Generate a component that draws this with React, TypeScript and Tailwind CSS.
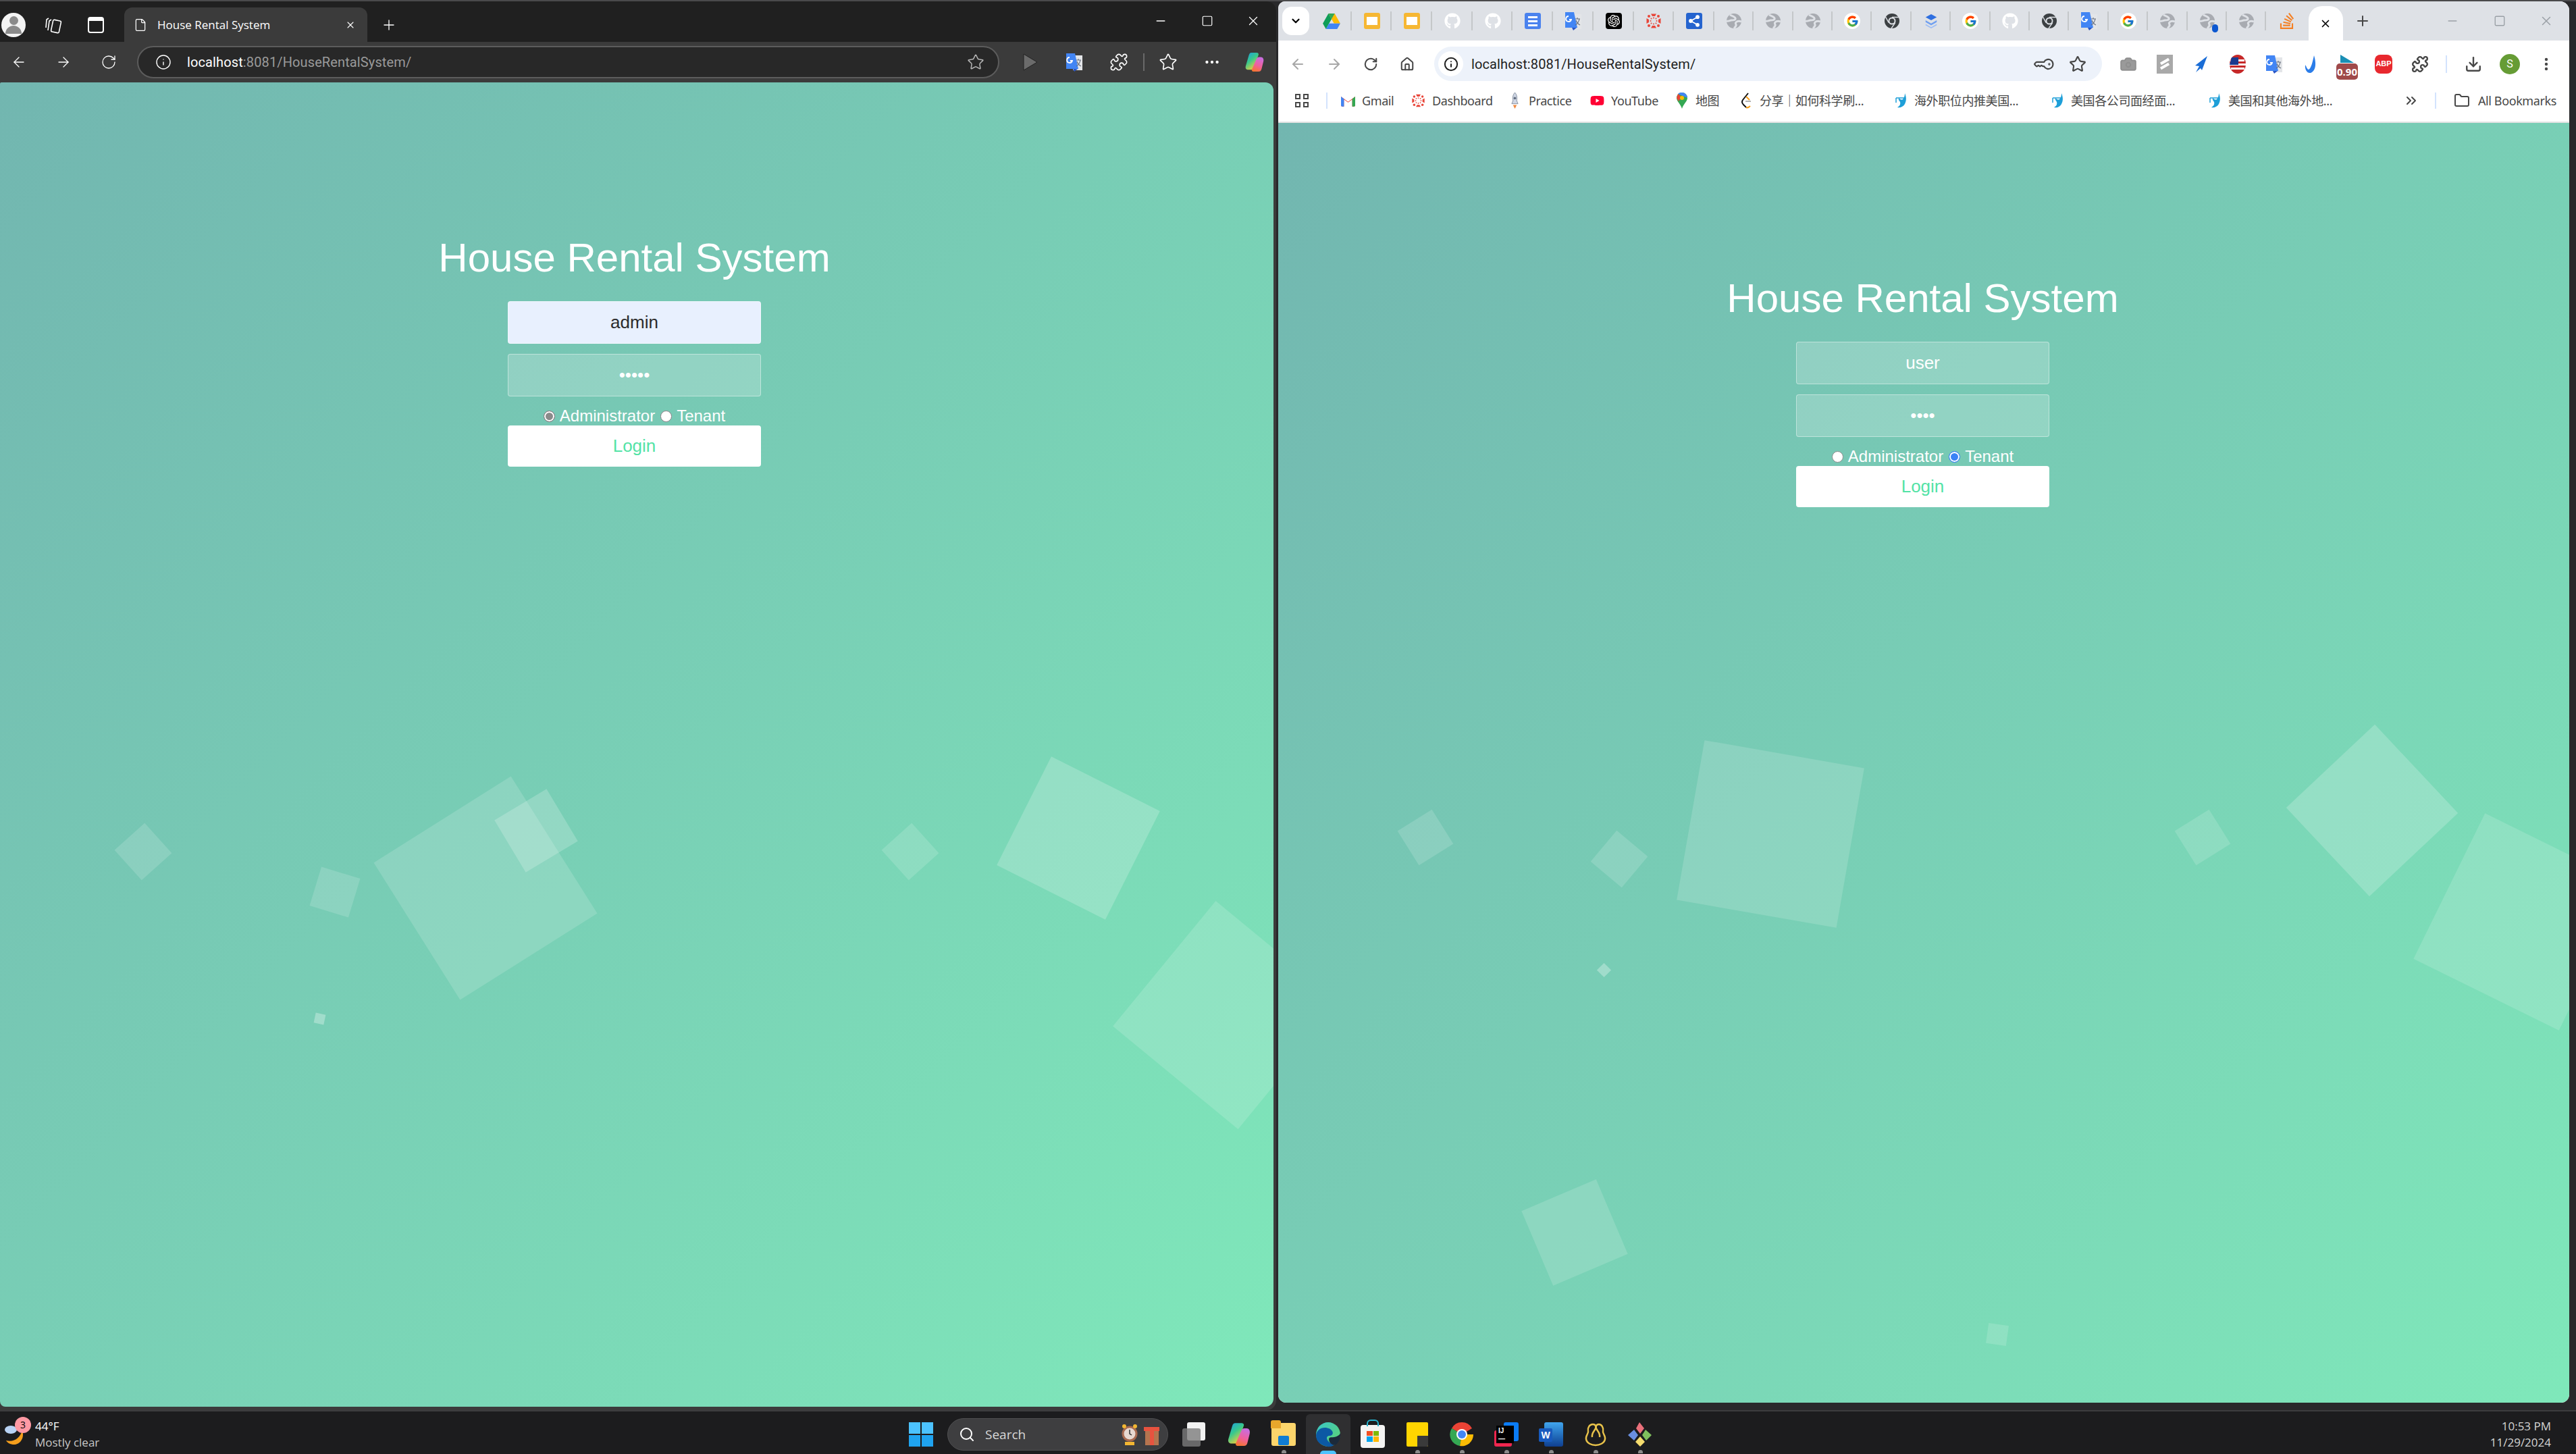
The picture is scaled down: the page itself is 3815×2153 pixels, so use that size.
import React from "react";
import {
  ArrowLeft, ArrowRight, RotateCw, Info, Star, Plus, X, Minus, Square, File, KeyRound, Home, Camera,
  Download, MoreVertical, MoreHorizontal, ChevronDown, ChevronsRight, Folder, Search, Puzzle,
} from "lucide-react";
import { FaGithub, FaYoutube } from "react-icons/fa";
import { FcGoogle } from "react-icons/fc";
import { SiOpenai, SiStackoverflow } from "react-icons/si";

const Globe = ({ dot = false }: { dot?: boolean }) => (
  <div className="relative w-[24px] h-[24px]">
    <svg viewBox="0 0 24 24" className="w-[24px] h-[24px]">
      <circle cx="12" cy="12" r="11" fill="#a8abb1" />
      <path d="M6 3c3 2 7 2 8 5s-4 3-6 3-4 2-7 1M23 13c-3-1-6-1-8 1s1 3 0 5-2 3-3 4" fill="none" stroke="#dee1e6" strokeWidth="3" />
    </svg>
    {dot && <span className="absolute right-[-4px] bottom-[-5px] w-[9px] h-[12px] rounded-full bg-[#0b57d0]" />}
  </div>
);

const Translate = () => (
  <svg viewBox="0 0 26 28" className="w-[26px] h-[28px]">
    <path d="M11 4h14v22H11z" fill="#e3e5e8" />
    <path d="M1 1h13l5 23H1z" fill="#4285f4" />
    <path d="M11 24h7l-5 4z" fill="#2a56c6" />
    <path d="M6 7a4 4 0 1 0 4 5H7" fill="none" stroke="#fff" strokeWidth="1.8" />
    <path d="M16 11h7M19 9v2M22 11c-1 5-4 8-6 9M17 13c1 3 4 6 6 7" fill="none" stroke="#6b7280" strokeWidth="1.2" />
  </svg>
);

const Drive = () => (
  <svg viewBox="0 0 28 26" className="w-[26px] h-[24px]">
    <path d="M9 1h10l9 16H18z" fill="#fbbc04" />
    <path d="M9 1l5 9-9 16-5-9z" fill="#0f9d58" />
    <path d="M10 17h18l-5 9H5z" fill="#4285f4" />
    <path d="M9 1h10l-5 9z" fill="#34a853" />
  </svg>
);

const Slides = () => (
  <div className="w-[24px] h-[24px] bg-[#f6b733] rounded-[3px] flex items-center justify-center">
    <div className="w-[16px] h-[12px] bg-white" />
  </div>
);

const Docs = () => (
  <div className="w-[24px] h-[24px] bg-[#4a82ee] rounded-[3px] flex flex-col items-center justify-center gap-[3px]">
    <div className="w-[14px] h-[3px] bg-white" />
    <div className="w-[14px] h-[3px] bg-white" />
    <div className="w-[14px] h-[3px] bg-white" />
  </div>
);

const Canvas = ({ s = 24 }: { s?: number }) => (
  <svg viewBox="0 0 24 24" width={s} height={s}>
    <g fill="#e8463a">
      <path d="M8 1.5h8L14 5h-4zM8 22.5h8L14 19h-4zM1.5 8v8L5 14v-4zM22.5 8v8L19 14v-4z" />
      <circle cx="5" cy="5" r="2" /><circle cx="19" cy="5" r="2" /><circle cx="5" cy="19" r="2" /><circle cx="19" cy="19" r="2" />
      <circle cx="12" cy="7.5" r="1" /><circle cx="12" cy="16.5" r="1" /><circle cx="7.5" cy="12" r="1" /><circle cx="16.5" cy="12" r="1" />
      <circle cx="8.5" cy="8.5" r="1" /><circle cx="15.5" cy="8.5" r="1" /><circle cx="8.5" cy="15.5" r="1" /><circle cx="15.5" cy="15.5" r="1" />
    </g>
  </svg>
);

const ShareTile = () => (
  <div className="w-[24px] h-[24px] bg-[#2564cf] rounded-[3px] flex items-center justify-center">
    <svg viewBox="0 0 24 24" className="w-[20px] h-[20px]">
      <path d="M6 12l12-7M6 12l12 7" stroke="#fff" strokeWidth="2" />
      <circle cx="6" cy="12" r="3.5" fill="#fff" /><circle cx="18" cy="5" r="3.5" fill="#fff" /><circle cx="18" cy="19" r="3.5" fill="#fff" />
    </svg>
  </div>
);

const ChromeDark = () => (
  <svg viewBox="0 0 24 24" className="w-[24px] h-[24px]">
    <circle cx="12" cy="12" r="11" fill="#3c4043" />
    <circle cx="12" cy="12" r="5.5" fill="#dee1e6" />
    <circle cx="12" cy="12" r="3.6" fill="#3c4043" />
    <path d="M12 6.5h10M7.2 14.7L2.5 6M16.8 14.7L11 23" stroke="#dee1e6" strokeWidth="1.4" />
  </svg>
);

const Layers = () => (
  <svg viewBox="0 0 24 24" className="w-[22px] h-[24px]">
    <path d="M12 1l9 5-9 5-9-5z" fill="#2f6fe0" />
    <path d="M3 11l9 5 9-5v3l-9 5-9-5z" fill="#6f9ff0" />
    <path d="M3 17l9 5 9-5v2l-9 5-9-5z" fill="#9dbdf5" />
  </svg>
);

const GithubTab = () => <FaGithub className="w-[24px] h-[24px] text-white" />;
const GoogleTab = () => (
  <div className="w-[24px] h-[24px] rounded-full bg-white flex items-center justify-center"><FcGoogle className="w-[19px] h-[19px]" /></div>
);
const ChatGpt = () => (
  <div className="w-[24px] h-[24px] bg-black rounded-[4px] flex items-center justify-center"><SiOpenai className="w-[18px] h-[18px] text-white" /></div>
);

const tabIcons = [
  <Drive />, <Slides />, <Slides />, <GithubTab />, <GithubTab />, <Docs />, <Translate />, <ChatGpt />, <Canvas />, <ShareTile />,
  <Globe />, <Globe />, <Globe />, <GoogleTab />, <ChromeDark />, <Layers />, <GoogleTab />, <GithubTab />, <ChromeDark />, <Translate />,
  <GoogleTab />, <Globe />, <Globe dot />, <Globe />, <SiStackoverflow className="w-[24px] h-[24px] text-[#f48024]" />,
];

const Copilot = ({ s = 30 }: { s?: number }) => (
  <svg viewBox="0 0 30 32" width={s} height={s}>
    <defs>
      <linearGradient id="cpa" x1="0" y1="0" x2="0.6" y2="1">
        <stop offset="0" stopColor="#1b9be8" /><stop offset="0.5" stopColor="#38c88c" /><stop offset="1" stopColor="#f2cf3a" />
      </linearGradient>
      <linearGradient id="cpb" x1="0.6" y1="0" x2="0.3" y2="1">
        <stop offset="0" stopColor="#c86de0" /><stop offset="0.55" stopColor="#f0609c" /><stop offset="1" stopColor="#f5752f" />
      </linearGradient>
    </defs>
    <path d="M10 1h8c3 0 4 2 3 4l-7 20c-1 2-2 3-5 3H5c-3 0-5-2-4-6l5-17c1-3 2-4 4-4z" fill="url(#cpa)" />
    <path d="M13 31h8c3 0 4-1 5-4l3-12c1-4-1-7-4-7h-3c-2 0-3 1-4 3l-7 16c-1 2 0 4 2 4z" fill="url(#cpb)" />
  </svg>
);

const Squares = () => (
  <div className="grid grid-cols-2 gap-[4px]">
    <span className="w-[8px] h-[8px] border-2 border-[#474747]" /><span className="w-[8px] h-[8px] border-2 border-[#474747]" />
    <span className="w-[8px] h-[8px] border-2 border-[#474747]" /><span className="w-[8px] h-[8px] border-2 border-[#474747]" />
  </div>
);

const Wing = () => (
  <svg viewBox="0 0 20 24" className="w-[20px] h-[24px]">
    <path d="M16 1c2 5 3 10 0 16-2 4-7 6-11 5 3-2 5-4 4-8-1-2-3-3-2-6 3 3 5 3 6 2 2-2 3-5 3-9z" fill="#1e9fd8" />
    <path d="M3 8h14M3 8v7" stroke="#1e9fd8" strokeWidth="1.5" fill="none" />
  </svg>
);

function Bookmark({ icon, label, cls }: { icon: React.ReactNode; label: string; cls: string }) {
  return (
    <div className={"flex items-center shrink-0 " + cls}>
      <span className="w-[21px] flex justify-center">{icon}</span>
      <span className="ml-[10px] text-[18px] leading-[24px] text-[#474747] whitespace-nowrap font-['Noto_Sans','Noto_Sans_CJK_SC',sans-serif] tracking-[-0.4px]">{label}</span>
    </div>
  );
}

function LoginForm({ user, pass, userFilled, tenant, bubbles, cls }: {
  user: string; pass: string; userFilled: boolean; tenant: boolean; bubbles: React.ReactNode; cls: string;
}) {
  return (
    <div className={"relative overflow-hidden bg-linear-to-br from-[#72b6b0] to-[#7fe8ba] font-['Liberation_Sans',Arial,sans-serif] " + cls}>
      {bubbles}
      <div className="relative flex flex-col items-center pt-[224px]">
        <h1 className="text-[60px] leading-[72px] font-extralight text-white">House Rental System</h1>
        <form className="mt-[28px] w-[375px] flex flex-col items-center">
          <input
            readOnly
            value={user}
            className={
              userFilled
                ? "w-full h-[63px] rounded-[4px] border border-white/40 bg-[#e8f0fe] text-center text-[26px] text-[#2b2b2b] outline-none"
                : "w-full h-[63px] rounded-[4px] border border-white/40 bg-white/20 text-center text-[26px] text-white outline-none"
            }
          />
          <input
            readOnly
            type="password"
            value={pass}
            className="mt-[15px] w-full h-[63px] rounded-[4px] border border-white/40 bg-white/20 text-center text-[26px] text-white outline-none"
          />
          <div className="mt-[15px] h-[28px] flex items-center text-[24px] leading-[28px] text-white">
            <span className={
              tenant
                ? "w-[17px] h-[17px] rounded-full border border-[#8a8a8a] bg-white"
                : "w-[17px] h-[17px] rounded-full border border-[#8a7f86] bg-[#8a8a8a] shadow-[inset_0_0_0_2px_white]"
            } />
            <span className="ml-[7px]">Administrator</span>
            <span className={
              tenant
                ? "ml-[8px] w-[17px] h-[17px] rounded-full border border-[#3b82f6] bg-[#3b82f6] shadow-[inset_0_0_0_2px_white]"
                : "ml-[8px] w-[17px] h-[17px] rounded-full border border-[#8a7f86] bg-white"
            } />
            <span className="ml-[7px]">Tenant</span>
          </div>
          <button type="button" className="w-full h-[61px] rounded-[4px] bg-white text-[26px] text-[#53e3a6]">Login</button>
        </form>
      </div>
    </div>
  );
}

const leftBubbles = (
  <>
    <div className="absolute left-[599px] top-[1073px] w-[240px] h-[240px] rotate-[57.8deg] bg-white/15" />
    <div className="absolute left-[749px] top-[1063px] w-[90px] h-[90px] rotate-[59deg] bg-white/20" />
    <div className="absolute left-[182px] top-[1109px] w-[60px] h-[60px] rotate-[48deg] bg-white/15" />
    <div className="absolute left-[466px] top-[1169px] w-[60px] h-[60px] rotate-[17deg] bg-white/15" />
    <div className="absolute left-[466px] top-[1379px] w-[15px] h-[15px] rotate-[12deg] bg-white/30" />
    <div className="absolute left-[1318px] top-[1109px] w-[60px] h-[60px] rotate-[48deg] bg-white/15" />
    <div className="absolute left-[1507px] top-[1029px] w-[180px] h-[180px] rotate-[26.7deg] bg-white/20" />
    <div className="absolute left-[1697px] top-[1261px] w-[240px] h-[240px] rotate-[39.4deg] bg-white/15" />
  </>
);

const rightBubbles = (
  <>
    <div className="absolute left-[609px] top-[933px] w-[240px] h-[240px] rotate-[9.9deg] bg-white/15" />
    <div className="absolute left-[188px] top-[1028px] w-[60px] h-[60px] rotate-[58deg] bg-white/15" />
    <div className="absolute left-[475px] top-[1060px] w-[60px] h-[60px] rotate-[40deg] bg-white/15" />
    <div className="absolute left-[475px] top-[1247px] w-[15px] h-[15px] rotate-[45deg] bg-white/30" />
    <div className="absolute left-[1339px] top-[1028px] w-[60px] h-[60px] rotate-[58deg] bg-white/15" />
    <div className="absolute left-[1530px] top-[928px] w-[180px] h-[180px] rotate-[46.8deg] bg-white/20" />
    <div className="absolute left-[1722px] top-[1063px] w-[240px] h-[240px] rotate-[26.2deg] bg-white/15" />
    <div className="absolute left-[379px] top-[1583px] w-[120px] h-[120px] rotate-[67deg] bg-white/15" />
    <div className="absolute left-[1050px] top-[1779px] w-[30px] h-[30px] rotate-[8deg] bg-white/15" />
  </>
);

function EdgeWindow() {
  return (
    <div className="w-[1890px] h-full bg-[#3b3b3b] flex flex-col rounded-r-[14px] text-white">
      <div className="h-[60px] pt-[9px] bg-[#202020] flex items-center rounded-tr-[14px] font-['Open_Sans',sans-serif]">
        <div className="ml-[2px] w-[36px] h-[36px] rounded-full bg-[#f4f4f4] flex flex-col items-center justify-center overflow-hidden">
          <span className="w-[13px] h-[13px] rounded-full bg-[#8b8b8b]" />
          <span className="mt-[1px] w-[24px] h-[12px] rounded-t-full bg-[#8b8b8b]" />
        </div>
        <svg viewBox="0 0 26 26" className="ml-[28px] w-[26px] h-[26px]" fill="none" stroke="#fff" strokeWidth="1.6" strokeLinejoin="round">
          <rect x="11" y="6" width="12" height="18" rx="2" transform="rotate(12 17 15)" />
          <path d="M10 5l-3 2-2 14M6 3L3 5 2 17" />
        </svg>
        <div className="ml-[38px] w-[24px] h-[24px] rounded-[4px] border-2 border-white border-t-[6px]" />
        <div className="ml-[30px] w-[360px] h-full rounded-t-[12px] bg-[#3b3b3b] flex items-center pl-[14px] pr-[17px]">
          <File className="w-[20px] h-[24px] text-white" strokeWidth={1.5} />
          <span className="ml-[15px] flex-1 text-[17px] text-white whitespace-nowrap">House Rental System</span>
          <X className="w-[16px] h-[16px] text-white" strokeWidth={1.6} />
        </div>
        <Plus className="ml-[20px] w-[24px] h-[24px] text-white" strokeWidth={1.3} />
        <div className="flex-1" />
        <div className="flex items-center mb-[11px]">
          <span className="w-[69px] flex justify-center"><Minus className="w-[20px] h-[20px]" strokeWidth={1.6} /></span>
          <span className="w-[69px] flex justify-center"><Square className="w-[18px] h-[18px]" strokeWidth={1.6} /></span>
          <span className="w-[68px] flex justify-center"><X className="w-[22px] h-[22px]" strokeWidth={1.4} /></span>
        </div>
      </div>
      <div className="h-[60px] flex items-center">
        <ArrowLeft className="ml-[16px] w-[24px] h-[24px]" strokeWidth={1.3} />
        <ArrowRight className="ml-[42px] w-[24px] h-[24px]" strokeWidth={1.3} />
        <RotateCw className="ml-[43px] w-[24px] h-[24px]" strokeWidth={1.3} />
        <div className="ml-[30px] w-[1277px] h-[48px] rounded-full border-2 border-[#5c5c5c] bg-[#282828] flex items-center pl-[25px] pr-[20px]">
          <Info className="w-[24px] h-[24px]" strokeWidth={1.4} />
          <span className="ml-[23px] flex-1 text-[20px] font-['Roboto',sans-serif] tracking-[0.12px] whitespace-nowrap">
            <span className="text-white">localhost</span><span className="text-[#9a9a9a]">:8081/HouseRentalSystem/</span>
          </span>
          <Star className="w-[26px] h-[26px] text-[#b5b5b5]" strokeWidth={1.4} />
        </div>
        <svg viewBox="0 0 30 30" className="ml-[30px] w-[30px] h-[30px]"><path d="M6 3l20 12L6 27z" fill="#6b6b6b" stroke="#222" /></svg>
        <span className="ml-[36px] w-[30px] flex justify-center"><Translate /></span>
        <Puzzle className="ml-[37px] w-[28px] h-[28px]" strokeWidth={1.4} />
        <span className="ml-[22px] w-[2px] h-[26px] bg-[#6a6a6a]" />
        <Star className="ml-[21px] w-[28px] h-[28px]" strokeWidth={1.4} />
        <MoreHorizontal className="ml-[38px] w-[26px] h-[26px]" strokeWidth={2} />
        <span className="ml-[35px]"><Copilot /></span>
      </div>
      <LoginForm
        user="admin"
        pass="admin"
        userFilled
        tenant={false}
        bubbles={leftBubbles}
        cls="w-[1886px] h-[1961px] rounded-r-[12px] rounded-bl-[8px] rounded-tl-[2px] pr-[7px]"
      />
    </div>
  );
}

function ExtSlot({ children }: { children: React.ReactNode }) {
  return <span className="w-[54px] flex items-center justify-center shrink-0">{children}</span>;
}

function ChromeWindow() {
  return (
    <div className="ml-[3px] w-[1912px] h-[2075px] flex flex-col rounded-tr-[14px] rounded-b-[12px] rounded-tl-[10px] overflow-hidden bg-white">
      <div className="h-[58px] bg-[#dee1e6] flex items-center">
        <span className="ml-[6px] w-[40px] h-[42px] rounded-[14px] bg-white flex items-center justify-center">
          <ChevronDown className="w-[18px] h-[18px] text-black" strokeWidth={3} />
        </span>
        <div className="ml-[3px] flex items-center">
          {tabIcons.map((ic, i) => (
            <span key={i} className={(i < 10 ? "w-[59.7px]" : "w-[58.4px]") + " flex items-center shrink-0"}>
              <span className="flex-1 flex justify-center pl-[2px]">{ic}</span>
              {i < 24 && <span className="w-[2px] h-[28px] bg-[#c4c7c9]" />}
            </span>
          ))}
        </div>
        <span className="ml-[4px] w-[51px] h-[51px] self-end rounded-t-[20px] bg-white flex items-center justify-center">
          <X className="w-[18px] h-[18px] text-black" strokeWidth={2.2} />
        </span>
        <Plus className="ml-[17px] w-[24px] h-[24px] text-[#474747]" strokeWidth={2} />
        <div className="flex-1" />
        <span className="w-[70px] flex justify-center"><Minus className="w-[20px] h-[20px] text-[#9aa0a6]" strokeWidth={1.8} /></span>
        <span className="w-[70px] flex justify-center"><Square className="w-[18px] h-[18px] text-[#9aa0a6]" strokeWidth={1.8} /></span>
        <span className="w-[68px] flex justify-center"><X className="w-[22px] h-[22px] text-[#9aa0a6]" strokeWidth={1.6} /></span>
      </div>
      <div className="h-[65px] pt-[4px] bg-white flex items-center">
        <span className="ml-[2px]" />
        <ExtSlot><ArrowLeft className="w-[24px] h-[24px] text-[#a8a8a8]" strokeWidth={2} /></ExtSlot>
        <ExtSlot><ArrowRight className="w-[24px] h-[24px] text-[#a8a8a8]" strokeWidth={2} /></ExtSlot>
        <ExtSlot><RotateCw className="w-[22px] h-[22px] text-[#474747]" strokeWidth={2.2} /></ExtSlot>
        <ExtSlot><Home className="w-[22px] h-[22px] text-[#474747]" strokeWidth={2.2} /></ExtSlot>
        <div className="ml-[13px] w-[989px] h-[51px] rounded-full bg-[#edf2fa] flex items-center pl-[6px] pr-[23px]">
          <span className="w-[37px] h-[37px] rounded-full bg-white flex items-center justify-center">
            <Info className="w-[22px] h-[22px] text-[#1f1f1f]" strokeWidth={2.2} />
          </span>
          <span className="ml-[12px] flex-1 text-[20px] text-[#1f1f1f] font-['Roboto',sans-serif] tracking-[0.12px] whitespace-nowrap">localhost:8081/HouseRentalSystem/</span>
          <KeyRound className="w-[26px] h-[26px] text-[#474747] rotate-[45deg]" strokeWidth={2} />
          <Star className="ml-[23px] w-[26px] h-[26px] text-[#474747]" strokeWidth={2} />
        </div>
        <span className="ml-[12px]" />
        <ExtSlot><Camera className="w-[26px] h-[26px] text-[#8f8f8f] fill-[#9a9a9a]" strokeWidth={1.8} /></ExtSlot>
        <ExtSlot>
          <span className="w-[24px] h-[28px] bg-[#a9a9a9] flex flex-col items-center justify-center gap-[3px]">
            <span className="w-[14px] h-[4px] bg-white -rotate-[30deg]" /><span className="w-[14px] h-[4px] bg-white -rotate-[30deg]" />
          </span>
        </ExtSlot>
        <ExtSlot>
          <svg viewBox="0 0 24 28" className="w-[24px] h-[28px]"><path d="M21 2L3 16l6 1-5 9 7-6 2 3z" fill="#1a6dd6" /></svg>
        </ExtSlot>
        <ExtSlot>
          <svg viewBox="0 0 26 28" className="w-[26px] h-[28px]">
            <ellipse cx="13" cy="14" rx="12" ry="14" fill="#c62828" />
            <path d="M3 7h20v3H2zM1 13h24v3H1zM3 19h20v3H3z" fill="#fff" />
            <path d="M4 4h10v11H1z" fill="#1a3a8f" />
          </svg>
        </ExtSlot>
        <ExtSlot><Translate /></ExtSlot>
        <ExtSlot>
          <svg viewBox="0 0 20 28" className="w-[20px] h-[28px]"><path d="M15 1c3 10 4 22-5 26-5 1-9-5-8-12 2 3 3 7 5 7 4-2 6-12 8-21z" fill="#2b7de9" /></svg>
        </ExtSlot>
        <ExtSlot>
          <span className="flex flex-col items-center -mb-[9px]">
            <svg viewBox="0 0 22 12" className="w-[22px] h-[14px]"><path d="M1 0v12h20z" fill="#1a8fb5" /></svg>
            <span className="w-[32px] h-[24px] rounded-[5px] bg-[#a04a4a] text-white text-[15px] leading-[24px] text-center font-bold font-['Open_Sans',sans-serif]">0.90</span>
          </span>
        </ExtSlot>
        <ExtSlot>
          <span className="w-[26px] h-[28px] bg-[#e8282e] rounded-[8px] flex items-center justify-center text-white text-[11px] font-bold font-['Liberation_Sans',sans-serif]">ABP</span>
        </ExtSlot>
        <ExtSlot><Puzzle className="w-[26px] h-[26px] text-[#474747]" strokeWidth={2.2} /></ExtSlot>
        <span className="ml-[11px] w-[2px] h-[26px] bg-[#d3e3fd]" />
        <span className="ml-[12px]" />
        <ExtSlot><Download className="w-[26px] h-[26px] text-[#474747]" strokeWidth={2.2} /></ExtSlot>
        <ExtSlot>
          <span className="w-[30px] h-[30px] rounded-full bg-[#669c35] text-white text-[16px] leading-[30px] text-center font-['Roboto',sans-serif]">S</span>
        </ExtSlot>
        <ExtSlot><MoreVertical className="w-[24px] h-[24px] text-[#474747]" strokeWidth={2.4} /></ExtSlot>
      </div>
      <div className="h-[57px] pb-[7px] bg-white border-b-2 border-[#e3e3e3] flex items-center">
        <span className="ml-[25px]"><Squares /></span>
        <span className="ml-[26px] w-[2px] h-[24px] bg-[#d3e3fd]" />
        <div className="ml-[20px]" />
        <Bookmark cls="w-[104px]" label="Gmail" icon={
          <svg viewBox="0 0 24 20" className="w-[21px] h-[18px]">
            <path d="M0 3l12 9 12-9v15a2 2 0 0 1-2 2h-3V8l-7 5-7-5v12H2a2 2 0 0 1-2-2z" fill="#ea4335" />
            <path d="M0 3v15a2 2 0 0 0 2 2h3V7z" fill="#4285f4" /><path d="M19 7v13h3a2 2 0 0 0 2-2V3z" fill="#34a853" />
          </svg>
        } />
        <Bookmark cls="w-[143px]" label="Dashboard" icon={<Canvas s={22} />} />
        <Bookmark cls="w-[122px]" label="Practice" icon={
          <svg viewBox="0 0 16 26" className="w-[15px] h-[24px]">
            <path d="M8 0c3 3 4 7 3 13l2 5H3l2-5C4 7 5 3 8 0z" fill="#cfd6e4" stroke="#5f6b7e" strokeWidth="0.7" /><circle cx="8" cy="9" r="2" fill="#5f6b7e" />
            <path d="M5 20h6l-3 6z" fill="#f0883e" />
          </svg>
        } />
        <Bookmark cls="w-[125px]" label="YouTube" icon={<FaYoutube className="w-[22px] h-[22px] text-[#ff0033]" />} />
        <Bookmark cls="w-[95px]" label="地图" icon={
          <svg viewBox="0 0 16 24" className="w-[16px] h-[24px]">
            <path d="M8 0a8 8 0 0 1 8 8c0 5-6 9-8 16C6 17 0 13 0 8a8 8 0 0 1 8-8z" fill="#34a853" />
            <path d="M8 0a8 8 0 0 1 8 8L2 2a8 8 0 0 1 6-2z" fill="#4285f4" /><path d="M0 8l2-6 5 4-4 7z" fill="#ea4335" />
            <circle cx="8" cy="8" r="3" fill="#fbbc04" />
          </svg>
        } />
        <Bookmark cls="w-[229px]" label="分享｜如何科学刷..." icon={
          <svg viewBox="0 0 16 24" className="w-[16px] h-[24px]" fill="none" strokeWidth="2">
            <path d="M11 1L3 11c-2 3-1 5 1 7l4 4" stroke="#111" /><path d="M8 22c2 1 4 0 6-2M8 6l5 5" stroke="#f89f1b" /><path d="M7 13h8" stroke="#b3b3b3" />
          </svg>
        } />
        <Bookmark cls="w-[232px]" label="海外职位内推美国..." icon={<Wing />} />
        <Bookmark cls="w-[233px]" label="美国各公司面经面..." icon={<Wing />} />
        <Bookmark cls="w-[290px]" label="美国和其他海外地..." icon={<Wing />} />
        <ChevronsRight className="w-[24px] h-[24px] text-[#474747]" strokeWidth={2} />
        <span className="ml-[23px] w-[2px] h-[24px] bg-[#d3e3fd]" />
        <Folder className="ml-[26px] w-[24px] h-[24px] text-[#474747]" strokeWidth={2} />
        <span className="ml-[12px] text-[18px] text-[#474747] whitespace-nowrap font-['Noto_Sans',sans-serif] tracking-[-0.4px]">All Bookmarks</span>
      </div>
      <LoginForm
        user="user"
        pass="user"
        userFilled={false}
        tenant
        bubbles={rightBubbles}
        cls="w-[1912px] h-[1895px] rounded-br-[12px] pr-[3px]"
      />
    </div>
  );
}

function TaskSlot({ children, running = false, active = false }: { children: React.ReactNode; running?: boolean; active?: boolean }) {
  return (
    <div className={"relative w-[66px] h-[59px] self-end flex items-center justify-center shrink-0 " + (active ? "bg-[#2f2f31] rounded-t-[6px]" : "")}>
      {children}
      {running && <span className="absolute bottom-[1px] left-[30px] w-[7px] h-[5px] rounded-t-full bg-[#8a8a8a]" />}
      {active && <span className="absolute bottom-0 left-[21px] w-[24px] h-[5px] rounded-t-full bg-[#4cc2ff]" />}
    </div>
  );
}

function Taskbar() {
  return (
    <div className="h-[65px] border-t-2 border-[#3d3d3f] bg-[#1c1c1e] flex items-center pt-[5px] font-['Open_Sans',sans-serif]">
      <div className="w-[1346px] flex items-center shrink-0">
        <div className="relative ml-[5px] w-[34px] h-[36px]">
          <svg viewBox="0 0 34 36" className="w-[34px] h-[36px]">
            <path d="M28 12c4 12-4 22-14 21-6-1-9-4-10-6 12 3 21-4 24-15z" fill="#f59e1c" />
            <ellipse cx="11" cy="11" rx="9" ry="6" fill="#b9d3f5" />
          </svg>
          <span className="absolute left-[17px] top-[-8px] w-[24px] h-[24px] rounded-full bg-[#ff99a4] text-center text-[14px] leading-[24px] text-black">3</span>
        </div>
        <div className="ml-[13px] flex flex-col text-[17px] leading-[24px]">
          <span className="text-white">44°F</span>
          <span className="text-[#c8c8c8]">Mostly clear</span>
        </div>
      </div>
      <div className="grid grid-cols-2 gap-[2px] w-[36px] h-[36px] shrink-0">
        <span className="bg-[#4cc2ff]" /><span className="bg-[#4cc2ff]" /><span className="bg-[#1fa3f0]" /><span className="bg-[#1fa3f0]" />
      </div>
      <div className="ml-[21px] w-[327px] h-[48px] rounded-full bg-[#3e3e40] border border-[#505052] flex items-center pl-[16px] shrink-0">
        <Search className="w-[24px] h-[24px] text-white" strokeWidth={2} />
        <span className="ml-[15px] flex-1 text-[19px] text-[#d8d8d8]">Search</span>
        <svg viewBox="0 0 56 34" className="w-[56px] h-[34px] mr-[12px]">
          <circle cx="12" cy="16" r="10" fill="#e7d8d0" stroke="#a86a50" strokeWidth="3" /><path d="M12 10v6l3 2" stroke="#333" strokeWidth="1.5" fill="none" />
          <circle cx="4" cy="5" r="3" fill="#f2b632" /><circle cx="20" cy="5" r="3" fill="#f2b632" /><rect x="5" y="28" width="14" height="5" fill="#f2b632" />
          <rect x="35" y="9" width="20" height="24" fill="#b5744f" /><rect x="42" y="9" width="6" height="24" fill="#e8533f" /><rect x="33" y="6" width="23" height="6" fill="#e8533f" />
        </svg>
      </div>
      <div className="ml-[6px] flex items-end self-stretch">
        <TaskSlot>
          <div className="relative w-[36px] h-[36px]">
            <span className="absolute right-[2px] top-0 w-[27px] h-[27px] rounded-[3px] bg-[#f2f2f2]" />
            <span className="absolute left-0 bottom-0 w-[27px] h-[27px] rounded-[3px] bg-[#7c7c7c]/80" />
          </div>
        </TaskSlot>
        <TaskSlot><Copilot s={36} /></TaskSlot>
        <TaskSlot running>
          <div className="relative w-[36px] h-[34px] rounded-[3px] bg-[#fcd56b]">
            <span className="absolute left-[-1px] top-[-4px] w-[15px] h-[12px] rounded-t-[3px] bg-[#e8a72c]" />
            <span className="absolute left-[10px] bottom-[1px] w-[16px] h-[14px] rounded-[2px] bg-[#0f7dd4]" />
          </div>
        </TaskSlot>
        <TaskSlot active>
          <svg viewBox="0 0 36 36" className="w-[38px] h-[38px]">
            <defs><linearGradient id="edg" x1="0" y1="0" x2="1" y2="1"><stop offset="0" stopColor="#39c7c9" /><stop offset="1" stopColor="#5fd36b" /></linearGradient></defs>
            <circle cx="18" cy="18" r="17" fill="url(#edg)" />
            <path d="M1 20C1 10 12 6 20 10c7 4 5 10 0 10-7 0-4 9 5 12 3 1-3 4-8 3C8 34 1 28 1 20z" fill="#0c59a4" />
            <path d="M22 22c6 0 12-2 13-6 1 8-3 15-8 17-7 0-11-11-5-11z" fill="#1b2a3b" />
          </svg>
        </TaskSlot>
        <TaskSlot>
          <div className="relative w-[36px] h-[34px] mt-[6px] rounded-[4px] bg-[#f4f4f4] grid grid-cols-2 gap-[1px] p-[9px]">
            <span className="bg-[#f25022]" /><span className="bg-[#7fba00]" /><span className="bg-[#00a4ef]" /><span className="bg-[#ffb900]" />
            <span className="absolute left-[9px] top-[-8px] w-[18px] h-[10px] rounded-t-[6px] border-2 border-b-0 border-[#27b3cf]" />
          </div>
        </TaskSlot>
        <TaskSlot running>
          <div className="relative w-[32px] h-[36px] bg-[#ffd500] overflow-hidden rounded-[2px]">
            <span className="absolute right-0 bottom-0 w-[16px] h-[16px] bg-[#3a3a3a]" />
          </div>
        </TaskSlot>
        <TaskSlot running>
          <svg viewBox="0 0 36 36" className="w-[36px] h-[36px]">
            <path d="M18 18L3 9a17 17 0 0 1 30 0z" fill="#ea4335" /><path d="M18 18L3 9a17 17 0 0 0 12 26z" fill="#34a853" />
            <path d="M18 18h17a17 17 0 0 1-20 17z" fill="#fbbc04" /><circle cx="18" cy="18" r="8" fill="#fff" /><circle cx="18" cy="18" r="6" fill="#4285f4" />
          </svg>
        </TaskSlot>
        <TaskSlot running>
          <div className="relative w-[36px] h-[36px]">
            <span className="absolute right-0 top-0 w-[22px] h-[28px] rounded-[3px] bg-[#0b7cf5]" />
            <span className="absolute left-0 bottom-0 w-[26px] h-[24px] rounded-[3px] bg-[#f0264f]" />
            <span className="absolute left-[3px] top-[5px] w-[26px] h-[26px] bg-black text-white text-[10px] leading-[12px] font-bold pl-[3px] pt-[2px] font-['Liberation_Sans',sans-serif]">IJ<br />—</span>
          </div>
        </TaskSlot>
        <TaskSlot running>
          <div className="relative w-[36px] h-[36px]">
            <span className="absolute right-0 top-0 w-[28px] h-[36px] rounded-[3px] bg-linear-to-b from-[#41a5ee] to-[#103f91]" />
            <span className="absolute left-0 top-[9px] w-[20px] h-[20px] rounded-[2px] bg-[#185abd] text-white text-[14px] leading-[20px] text-center font-bold font-['Liberation_Sans',sans-serif]">W</span>
          </div>
        </TaskSlot>
        <TaskSlot running>
          <svg viewBox="0 0 36 36" className="w-[36px] h-[36px]" fill="none" stroke="#e8c24a" strokeWidth="2.5">
            <path d="M14 3c-5 0-8 5-7 10 1 3-4 7-3 12 1 6 8 9 14 9s13-3 14-9c1-5-4-9-3-12 1-5-2-10-6-10-4 0-6 4-3 8 2 3 5 6 4 11" /><path d="M14 3c4 0 6 4 3 8-2 3-5 6-4 11" />
          </svg>
        </TaskSlot>
        <TaskSlot running>
          <svg viewBox="0 0 36 36" className="w-[36px] h-[36px]">
            <path d="M17 0l7 9-6 8-6-8z" fill="#e9707b" /><path d="M26 11l9 8-8 8-6-8z" fill="#7fbf5d" /><path d="M9 11l6 8-6 8-9-8z" fill="#6a8fe0" /><path d="M18 21l7 8-7 7-7-7z" fill="#f5dc6e" />
          </svg>
        </TaskSlot>
      </div>
      <div className="flex-1" />
      <div className="pr-[37px] flex flex-col items-end text-[17px] leading-[24px] text-[#d4d4d4] font-['Open_Sans',sans-serif]">
        <span>10:53 PM</span>
        <span>11/29/2024</span>
      </div>
    </div>
  );
}

export default function App() {
  return (
    <div className="w-[3815px] h-[2153px] overflow-hidden flex flex-col bg-[#29292b]">
      <div className="h-[2088px] border-t-2 border-[#4a4a4c] flex">
        <EdgeWindow />
        <ChromeWindow />
      </div>
      <Taskbar />
    </div>
  );
}
